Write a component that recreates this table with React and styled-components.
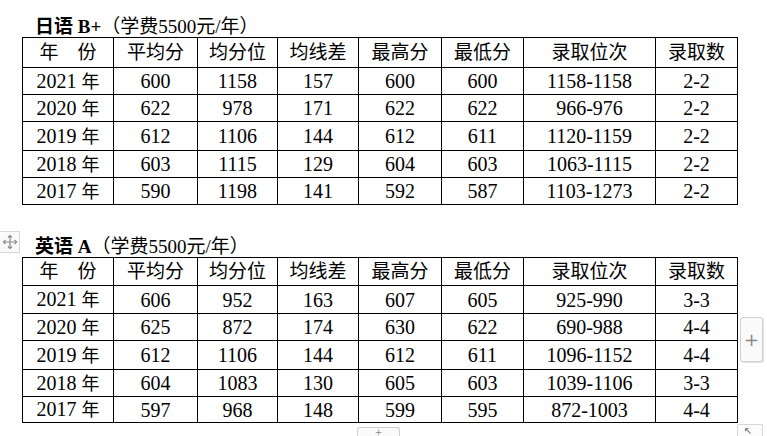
import React from 'react';
import styled, { createGlobalStyle } from 'styled-components';

const GlobalStyle = createGlobalStyle`
  html, body {
    margin: 0;
    padding: 0;
    background: #ffffff;
  }
  body {
    width: 767px;
    height: 436px;
    overflow: hidden;
    font-family: 'Liberation Serif', 'Noto Sans CJK SC', serif;
    color: #000;
  }
`;

const COLUMNS = ['年　份', '平均分', '均分位', '均线差', '最高分', '最低分', '录取位次', '录取数'];
const WIDTHS = [91, 84, 80, 81, 83, 82, 132, 82];

const tables = [
  {
    major: '日语',
    level: 'B+',
    headerHeight: 30,
    rows: [
      { h: 27, cells: ['2021', '600', '1158', '157', '600', '600', '1158-1158', '2-2'] },
      { h: 27, cells: ['2020', '622', '978', '171', '622', '622', '966-976', '2-2'] },
      { h: 29, cells: ['2019', '612', '1106', '144', '612', '611', '1120-1159', '2-2'] },
      { h: 27, cells: ['2018', '603', '1115', '129', '604', '603', '1063-1115', '2-2'] },
      { h: 27, cells: ['2017', '590', '1198', '141', '592', '587', '1103-1273', '2-2'] },
    ],
  },
  {
    major: '英语',
    level: 'A',
    headerHeight: 28,
    handle: true,
    rows: [
      { h: 28, cells: ['2021', '606', '952', '163', '607', '605', '925-990', '3-3'] },
      { h: 27, cells: ['2020', '625', '872', '174', '630', '622', '690-988', '4-4'] },
      { h: 29, cells: ['2019', '612', '1106', '144', '612', '611', '1096-1152', '4-4'] },
      { h: 27, cells: ['2018', '604', '1083', '130', '605', '603', '1039-1106', '3-3'] },
      { h: 26, cells: ['2017', '597', '968', '148', '599', '595', '872-1003', '4-4'] },
    ],
  },
];

function MoveIcon() {
  return (
    <svg width="16" height="16" viewBox="0 0 16 16" fill="none" stroke="#8a8a8a" strokeWidth="1.2">
      <path d="M8 1.5v13M1.5 8h13" />
      <path d="M6 3.5L8 1.5L10 3.5M6 12.5L8 14.5L10 12.5M3.5 6L1.5 8L3.5 10M12.5 6L14.5 8L12.5 10" />
    </svg>
  );
}

export default function App() {
  return (
    <Page>
      <GlobalStyle />
      {tables.map((t) => (
        <Section key={t.major}>
          {t.handle && (
            <MoveHandle>
              <MoveIcon />
            </MoveHandle>
          )}
          <Title>
            <Strong>{t.major}</Strong> <StrongLatin>{t.level}</StrongLatin>（学费5500元/年）
          </Title>
          <Table>
            <colgroup>
              {WIDTHS.map((w, k) => (
                <col key={k} style={{ width: w }} />
              ))}
            </colgroup>
            <tbody>
              <Row $h={t.headerHeight}>
                {COLUMNS.map((c) => (
                  <HeadCell key={c}>{c}</HeadCell>
                ))}
              </Row>
              {t.rows.map((r) => (
                <Row key={r.cells[0]} $h={r.h}>
                  {r.cells.map((c, k) => (
                    <Cell key={k}>
                      {k === 0 ? (
                        <>
                          {c} <Unit>年</Unit>
                        </>
                      ) : (
                        c
                      )}
                    </Cell>
                  ))}
                </Row>
              ))}
            </tbody>
          </Table>
        </Section>
      ))}
      <AddColumn>+</AddColumn>
      <AddRow>+</AddRow>
      <Resize>↖</Resize>
    </Page>
  );
}

const Page = styled.div`
  position: relative;
  width: 767px;
  height: 436px;
  padding: 13px 0 0 22px;
  box-sizing: border-box;
  display: flex;
  flex-direction: column;
  gap: 28px;
`;

const Section = styled.section`
  position: relative;
  display: flex;
  flex-direction: column;
`;

const Title = styled.div`
  height: 24px;
  line-height: 24px;
  padding-left: 13px;
  font-size: 19px;
  white-space: nowrap;
  font-family: 'Liberation Serif', 'Noto Sans CJK SC', serif;
`;

const Strong = styled.span`
  font-weight: 700;
  font-family: 'Noto Sans CJK SC', sans-serif;
`;

const StrongLatin = styled.span`
  font-weight: 700;
  font-family: 'Liberation Serif', serif;
`;

const Table = styled.table`
  border-collapse: collapse;
  table-layout: fixed;
  width: 716px;
`;

const Row = styled.tr`
  height: ${(p) => p.$h}px;
`;

const Cell = styled.td`
  border: 1px solid #000;
  padding: 0;
  text-align: center;
  vertical-align: middle;
  font-size: 20px;
  line-height: 20px;
  white-space: nowrap;
  font-family: 'Liberation Serif', 'Noto Sans CJK SC', serif;
`;

const HeadCell = styled(Cell)`
  font-size: 19px;
`;

const Unit = styled.span`
  font-size: 18px;
`;

const MoveHandle = styled.div`
  position: absolute;
  left: -22px;
  top: -2px;
  width: 20px;
  height: 22px;
  box-sizing: border-box;
  border: 1px solid #d6d6d6;
  border-left: none;
  background: #fafafa;
  display: flex;
  align-items: center;
  justify-content: center;
`;

const AddColumn = styled.div`
  position: absolute;
  left: 740px;
  top: 317px;
  width: 23px;
  height: 45px;
  box-sizing: border-box;
  border: 1px solid #cfcfcf;
  border-radius: 3px;
  background: #fafafa;
  box-shadow: 1px 1px 1px rgba(0, 0, 0, 0.12);
  color: #8a8a8a;
  font: 18px/43px 'DejaVu Sans', sans-serif;
  text-align: center;
`;

const AddRow = styled.div`
  position: absolute;
  left: 357px;
  top: 427px;
  width: 43px;
  height: 9px;
  box-sizing: border-box;
  border: 1px solid #cfcfcf;
  border-bottom: none;
  border-radius: 3px 3px 0 0;
  background: #fafafa;
  color: #8a8a8a;
  font: 9px/8px 'DejaVu Sans', sans-serif;
  text-align: center;
`;

const Resize = styled.div`
  position: absolute;
  left: 737px;
  top: 424px;
  width: 26px;
  height: 12px;
  box-sizing: border-box;
  border: 1px solid #d6d6d6;
  border-bottom: none;
  border-radius: 2px 2px 0 0;
  background: #fcfcfc;
  color: #555;
  font: 10px/10px 'DejaVu Sans', sans-serif;
  padding: 1px 0 0 6px;
`;
